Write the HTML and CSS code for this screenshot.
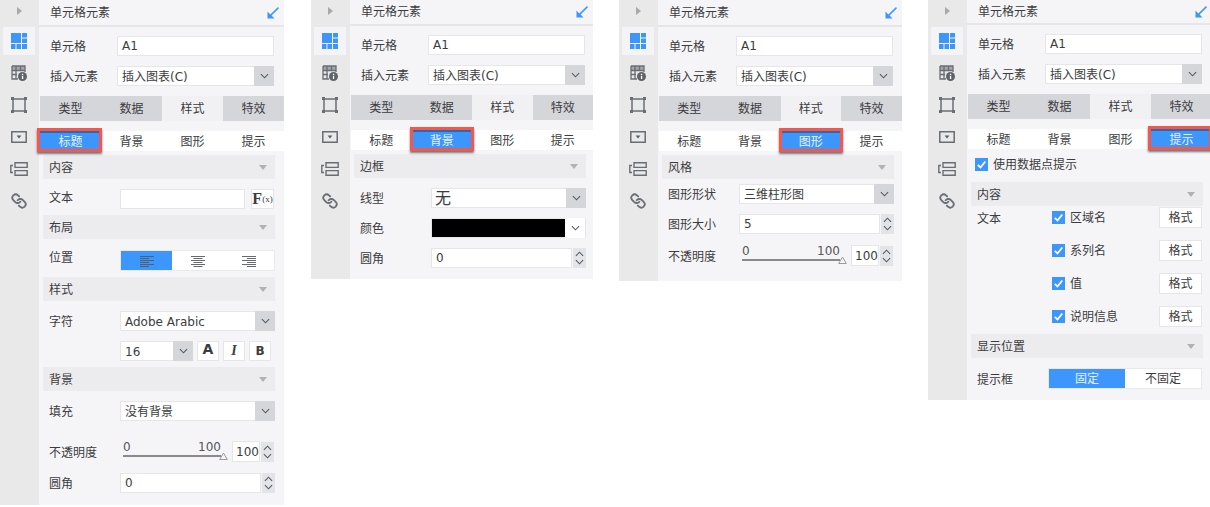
FILE: index.html
```html
<!DOCTYPE html>
<html lang="zh">
<head>
<meta charset="utf-8">
<title>单元格元素</title>
<link rel="stylesheet" href="styles.css">
</head>
<body>
<svg class="defs" xmlns="http://www.w3.org/2000/svg">
  <symbol id="i-grid" viewBox="0 0 16 16"><path fill="#3d96fb" d="M0 0h10v10H0zM11 0h5v4.500h-5zM11 5.500h5V10h-5zM0 11h4.500v5H0zM5.500 11H10v5H5.500zM11 11h5v5h-5z"/></symbol>
  <symbol id="i-info" viewBox="0 0 16 16"><path fill="none" stroke="#6a6d73" stroke-width="1.3" d="M1 1h13v6M1 1v13h6M1 5.500h13M1 9.500h5M5 1v13M9.500 1v5"/><path fill="#6a6d73" d="M1 1h13v4H1z" opacity=".55"/><circle cx="11.500" cy="11.500" r="4.500" fill="#5f6268"/><path fill="#fff" d="M10.900 8.800h1.300V10h-1.300zM10.900 10.800h1.300V14h-1.300z"/></symbol>
  <symbol id="i-frame" viewBox="0 0 16 16"><path fill="none" stroke="#6a6d73" stroke-width="1.5" d="M2 2h12v12H2z"/><path fill="#6a6d73" d="M0 0h3v3H0zM13 0h3v3h-3zM0 13h3v3H0zM13 13h3v3h-3z"/></symbol>
  <symbol id="i-drop" viewBox="0 0 16 12"><path fill="none" stroke="#6a6d73" stroke-width="1.5" d="M.8.800h14.400v10.400H.8z"/><path fill="#5a5d63" d="M5.600 4.500h4.800L8 7.500z"/></symbol>
  <symbol id="i-stack" viewBox="0 0 18 14"><path fill="none" stroke="#6a6d73" stroke-width="1.4" d="M5 .8h12.200v4.600H5zM5 8.600h12.200v4.600H5zM3 3.500H.8v7H3"/></symbol>
  <symbol id="i-link" viewBox="0 0 24 24"><g transform="translate(24 0) scale(-1 1)" fill="none" stroke="#6a6d73" stroke-width="2.700" stroke-linecap="round"><path d="M10 13a5 5 0 0 0 7.540.54l3-3a5 5 0 0 0-7.070-7.070l-1.720 1.710"/><path d="M14 11a5 5 0 0 0-7.540-.54l-3 3a5 5 0 0 0 7.070 7.070l1.710-1.710"/></g></symbol>
  <symbol id="i-arrow" viewBox="0 0 12 12"><path fill="#3d96fb" d="M11 0l1 1.200L4.600 8.600 7.500 11.500H.5V4.500l2.800 2.900z"/></symbol>
  <symbol id="i-down" viewBox="0 0 10 6"><path fill="none" stroke="#55585e" stroke-width="1.200" d="M1 1l4 4 4-4"/></symbol>
  <symbol id="i-up" viewBox="0 0 10 6"><path fill="none" stroke="#55585e" stroke-width="1.200" d="M1 5l4-4 4 4"/></symbol>
  <symbol id="i-left" viewBox="0 0 14 11"><path stroke="#55585e" stroke-width=".9" d="M0 .5h14M0 2.500h9M0 4.500h14M0 6.500h9M0 8.500h14M0 10.500h9"/></symbol>
  <symbol id="i-center" viewBox="0 0 14 11"><path stroke="#55585e" stroke-width=".9" d="M0 .5h14M2.500 2.500h9M0 4.500h14M2.500 6.500h9M0 8.500h14M2.500 10.500h9"/></symbol>
  <symbol id="i-right" viewBox="0 0 14 11"><path stroke="#55585e" stroke-width=".9" d="M0 .5h14M5 2.500h9M0 4.500h14M5 6.500h9M0 8.500h14M5 10.500h9"/></symbol>
  <symbol id="i-check" viewBox="0 0 13 13"><path fill="none" stroke="#fff" stroke-width="1.800" d="M2.800 6.800l2.700 2.700 4.800-6"/></symbol>
  <symbol id="i-thumb" viewBox="0 0 9 8"><path fill="#f5f5f7" stroke="#9a9a9e" d="M4.500 1 8.300 7.500H.7z"/></symbol>
</svg>

<main class="desk">

<section class="panel panel-a">
  <nav class="rail">
    <span class="rail-toggle"></span>
    <span class="rail-tile"><svg class="ic16"><use href="#i-grid"/></svg></span>
    <span class="rail-item"><svg class="ic16"><use href="#i-info"/></svg></span>
    <span class="rail-item"><svg class="ic16"><use href="#i-frame"/></svg></span>
    <span class="rail-item"><svg class="ic16 ic-drop"><use href="#i-drop"/></svg></span>
    <span class="rail-item"><svg class="ic16 ic-stack"><use href="#i-stack"/></svg></span>
    <span class="rail-item"><svg class="ic16"><use href="#i-link"/></svg></span>
  </nav>
  <div class="main">
    <header class="head"><span>单元格元素</span><svg class="head-ic"><use href="#i-arrow"/></svg></header>
    <div class="row top"><span class="lbl">单元格</span><div class="field grow">A1</div></div>
    <div class="row top"><span class="lbl">插入元素</span><div class="select grow"><span class="val">插入图表(C)</span><span class="caret"><svg class="chev"><use href="#i-down"/></svg></span></div></div>
    <div class="tabs"><span class="tab">类型</span><span class="tab">数据</span><span class="tab on">样式</span><span class="tab">特效</span></div>
    <div class="subtabs"><span class="sub active">标题</span><span class="sub">背景</span><span class="sub">图形</span><span class="sub">提示</span></div>
    <div class="sec first"><span>内容</span><i class="tri"></i></div>
    <div class="row"><span class="lbl lbl-up1">文本</span><div class="field w125"></div><div class="fx"><b>F</b><small>(x)</small></div></div>
    <div class="sec"><span>布局</span><i class="tri"></i></div>
    <div class="row tall"><span class="lbl lbl-up3">位置</span>
      <div class="seg grow">
        <span class="seg-b blue"><svg class="ic-al"><use href="#i-left"/></svg></span>
        <span class="seg-b"><svg class="ic-al"><use href="#i-center"/></svg></span>
        <span class="seg-b"><svg class="ic-al"><use href="#i-right"/></svg></span>
      </div>
    </div>
    <div class="sec"><span>样式</span><i class="tri"></i></div>
    <div class="row"><span class="lbl">字符</span><div class="select grow"><span class="val">Adobe Arabic</span><span class="caret"><svg class="chev"><use href="#i-down"/></svg></span></div></div>
    <div class="row">
      <span class="lbl"></span>
      <div class="select w73"><span class="val">16</span><span class="caret"><svg class="chev"><use href="#i-down"/></svg></span></div>
      <span class="fmt fmt-a">A</span><span class="fmt fmt-i">I</span><span class="fmt fmt-b">B</span>
    </div>
    <div class="sec"><span>背景</span><i class="tri"></i></div>
    <div class="row"><span class="lbl">填充</span><div class="select grow"><span class="val">没有背景</span><span class="caret"><svg class="chev"><use href="#i-down"/></svg></span></div></div>
    <div class="row slider-row gap-19"><span class="lbl">不透明度</span>
      <div class="slider"><div class="slider-nums"><span>0</span><span>100</span></div><div class="slider-line"></div><svg class="slider-thumb"><use href="#i-thumb"/></svg></div>
      <div class="field w28">100</div><div class="spin"><svg class="chev"><use href="#i-up"/></svg><svg class="chev"><use href="#i-down"/></svg></div>
    </div>
    <div class="row"><span class="lbl">圆角</span><div class="field w141">0</div><div class="spin"><svg class="chev"><use href="#i-up"/></svg><svg class="chev"><use href="#i-down"/></svg></div></div>
  </div>
</section>

<section class="panel panel-b">
  <nav class="rail">
    <span class="rail-toggle"></span>
    <span class="rail-tile"><svg class="ic16"><use href="#i-grid"/></svg></span>
    <span class="rail-item"><svg class="ic16"><use href="#i-info"/></svg></span>
    <span class="rail-item"><svg class="ic16"><use href="#i-frame"/></svg></span>
    <span class="rail-item"><svg class="ic16 ic-drop"><use href="#i-drop"/></svg></span>
    <span class="rail-item"><svg class="ic16 ic-stack"><use href="#i-stack"/></svg></span>
    <span class="rail-item"><svg class="ic16"><use href="#i-link"/></svg></span>
  </nav>
  <div class="main">
    <header class="head"><span>单元格元素</span><svg class="head-ic"><use href="#i-arrow"/></svg></header>
    <div class="row top"><span class="lbl">单元格</span><div class="field grow">A1</div></div>
    <div class="row top"><span class="lbl">插入元素</span><div class="select grow"><span class="val">插入图表(C)</span><span class="caret"><svg class="chev"><use href="#i-down"/></svg></span></div></div>
    <div class="tabs"><span class="tab">类型</span><span class="tab">数据</span><span class="tab on">样式</span><span class="tab">特效</span></div>
    <div class="subtabs"><span class="sub">标题</span><span class="sub active">背景</span><span class="sub">图形</span><span class="sub">提示</span></div>
    <div class="sec first"><span>边框</span><i class="tri"></i></div>
    <div class="row"><span class="lbl">线型</span><div class="select grow"><span class="val big">无</span><span class="caret"><svg class="chev"><use href="#i-down"/></svg></span></div></div>
    <div class="row"><span class="lbl">颜色</span><div class="color grow"><span class="swatch"></span><span class="caret white"><svg class="chev"><use href="#i-down"/></svg></span></div></div>
    <div class="row"><span class="lbl">圆角</span><div class="field w141">0</div><div class="spin"><svg class="chev"><use href="#i-up"/></svg><svg class="chev"><use href="#i-down"/></svg></div></div>
  </div>
</section>

<section class="panel panel-c">
  <nav class="rail">
    <span class="rail-toggle"></span>
    <span class="rail-tile"><svg class="ic16"><use href="#i-grid"/></svg></span>
    <span class="rail-item"><svg class="ic16"><use href="#i-info"/></svg></span>
    <span class="rail-item"><svg class="ic16"><use href="#i-frame"/></svg></span>
    <span class="rail-item"><svg class="ic16 ic-drop"><use href="#i-drop"/></svg></span>
    <span class="rail-item"><svg class="ic16 ic-stack"><use href="#i-stack"/></svg></span>
    <span class="rail-item"><svg class="ic16"><use href="#i-link"/></svg></span>
  </nav>
  <div class="main">
    <header class="head"><span>单元格元素</span><svg class="head-ic"><use href="#i-arrow"/></svg></header>
    <div class="row top"><span class="lbl">单元格</span><div class="field grow">A1</div></div>
    <div class="row top"><span class="lbl">插入元素</span><div class="select grow"><span class="val">插入图表(C)</span><span class="caret"><svg class="chev"><use href="#i-down"/></svg></span></div></div>
    <div class="tabs"><span class="tab">类型</span><span class="tab">数据</span><span class="tab on">样式</span><span class="tab">特效</span></div>
    <div class="subtabs"><span class="sub">标题</span><span class="sub">背景</span><span class="sub active">图形</span><span class="sub">提示</span></div>
    <div class="sec first"><span>风格</span><i class="tri"></i></div>
    <div class="row gap-5"><span class="lbl">图形形状</span><div class="select grow"><span class="val">三维柱形图</span><span class="caret"><svg class="chev"><use href="#i-down"/></svg></span></div></div>
    <div class="row"><span class="lbl">图形大小</span><div class="field w141">5</div><div class="spin"><svg class="chev"><use href="#i-up"/></svg><svg class="chev"><use href="#i-down"/></svg></div></div>
    <div class="row slider-row"><span class="lbl">不透明度</span>
      <div class="slider"><div class="slider-nums"><span>0</span><span>100</span></div><div class="slider-line"></div><svg class="slider-thumb"><use href="#i-thumb"/></svg></div>
      <div class="field w28">100</div><div class="spin"><svg class="chev"><use href="#i-up"/></svg><svg class="chev"><use href="#i-down"/></svg></div>
    </div>
  </div>
</section>

<section class="panel panel-d">
  <nav class="rail">
    <span class="rail-toggle"></span>
    <span class="rail-tile"><svg class="ic16"><use href="#i-grid"/></svg></span>
    <span class="rail-item"><svg class="ic16"><use href="#i-info"/></svg></span>
    <span class="rail-item"><svg class="ic16"><use href="#i-frame"/></svg></span>
    <span class="rail-item"><svg class="ic16 ic-drop"><use href="#i-drop"/></svg></span>
    <span class="rail-item"><svg class="ic16 ic-stack"><use href="#i-stack"/></svg></span>
    <span class="rail-item"><svg class="ic16"><use href="#i-link"/></svg></span>
  </nav>
  <div class="main">
    <header class="head"><span>单元格元素</span><svg class="head-ic"><use href="#i-arrow"/></svg></header>
    <div class="row top"><span class="lbl">单元格</span><div class="field grow">A1</div></div>
    <div class="row top"><span class="lbl">插入元素</span><div class="select grow"><span class="val">插入图表(C)</span><span class="caret"><svg class="chev"><use href="#i-down"/></svg></span></div></div>
    <div class="tabs"><span class="tab">类型</span><span class="tab">数据</span><span class="tab on">样式</span><span class="tab">特效</span></div>
    <div class="subtabs"><span class="sub">标题</span><span class="sub">背景</span><span class="sub">图形</span><span class="sub active">提示</span></div>
    <label class="use-tip"><span class="check"><svg class="check-ic"><use href="#i-check"/></svg></span>使用数据点提示</label>
    <div class="sec sec-tip"><span>内容</span><i class="tri"></i></div>
    <div class="tip-row first"><span class="lbl">文本</span><span class="check"><svg class="check-ic"><use href="#i-check"/></svg></span><span class="tip-name">区域名</span><span class="btn">格式</span></div>
    <div class="tip-row"><span class="lbl"></span><span class="check"><svg class="check-ic"><use href="#i-check"/></svg></span><span class="tip-name">系列名</span><span class="btn">格式</span></div>
    <div class="tip-row"><span class="lbl"></span><span class="check"><svg class="check-ic"><use href="#i-check"/></svg></span><span class="tip-name">值</span><span class="btn">格式</span></div>
    <div class="tip-row"><span class="lbl"></span><span class="check"><svg class="check-ic"><use href="#i-check"/></svg></span><span class="tip-name">说明信息</span><span class="btn">格式</span></div>
    <div class="sec sec-pos"><span>显示位置</span><i class="tri"></i></div>
    <div class="row tall pos-row"><span class="lbl">提示框</span><div class="seg seg-two grow"><span class="seg-b blue w76">固定</span><span class="seg-b">不固定</span></div></div>
  </div>
</section>

</main>
</body>
</html>
```
FILE: styles.css
```css
* { box-sizing: border-box; }
html, body { margin: 0; height: 100%; overflow: hidden; background: #fff; }
body { font: 12px/1 "DejaVu Sans", "Noto Sans CJK SC", sans-serif; color: #3c3c40; }
.defs { display: none; }

.desk { display: flex; align-items: flex-start; height: 507px; width: 1210px; }

.panel { display: flex; flex: none; }
.panel-a { width: 284px; height: 505px; }
.panel-b { width: 282px; height: 279px; margin-left: 27px; }
.panel-c { width: 283px; height: 281px; margin-left: 26px; }
.panel-d { width: 284px; height: 400px; margin-left: 26px; }

/* Left icon rail */
.rail { width: 39px; flex: none; background: #e9e9ea; display: flex; flex-direction: column; align-items: center; }
.rail-toggle { width: 0; height: 0; margin-top: 7px; margin-left: -1px; border-style: solid; border-width: 4.5px 0 4.5px 5px; border-color: transparent transparent transparent #a9a9ad; }
.rail-tile { width: 32px; height: 28px; margin-top: 12px; margin-left: -1px; background: #f4f4f6; display: flex; align-items: center; justify-content: center; }
.rail-item { height: 32px; display: flex; align-items: center; justify-content: center; margin-left: -1px; }
.rail-tile + .rail-item { margin-top: 2px; }
.ic16 { width: 16px; height: 16px; display: block; }
.ic-drop { height: 12px; }
.ic-stack { width: 18px; height: 14px; }

/* Panel body */
.main { flex: 1; background: #f5f5f7; min-width: 0; position: relative; }
.head { height: 27px; padding: 0 5px 0 11px; display: flex; align-items: center; justify-content: space-between; border-bottom: 2px solid #e6e6e8; }
.panel-b .head { height: 26px; }
.panel-d .head { height: 25px; }
.head-ic { width: 12px; height: 12px; }

.row { display: flex; align-items: center; height: 20px; margin-top: 10px; padding-left: 10px; }
.row.top { padding-left: 11px; }
.row.top .lbl { width: 67px; }
.head + .row { margin-top: 9px; }
.row.tall { height: 21px; margin-top: 11px; }
.lbl { width: 71px; flex: none; white-space: nowrap; padding-top: 2px; }
.lbl-up1 { padding-top: 0; margin-top: -2px; }
.lbl-up3 { padding-top: 0; margin-top: -6px; }
.grow { width: 155px; flex: none; }
.row.top .grow { width: 157px; }

.field { height: 20px; background: #fff; border: 1px solid #e6e6e8; padding-left: 4px; display: flex; align-items: center; flex: none; }
.w125 { width: 125px; }
.w28 { width: 28px; height: 21px; margin-left: 4px; padding-left: 3px; }
.w141 { width: 141px; }

.select { height: 20px; display: flex; background: #fff; border: 1px solid #e6e6e8; border-right: 0; align-items: center; flex: none; }
.val { flex: 1; padding: 2px 0 0 4px; white-space: nowrap; }
.val.big { font-size: 16px; padding-left: 3px; }
.caret { width: 20px; height: 20px; margin-top: -1px; margin-bottom: -1px; background: #d5d6da; display: flex; align-items: center; justify-content: center; flex: none; }
.caret.white { background: #fff; }
.chev { width: 9px; height: 6px; display: block; }
.w73 { width: 73px; }

.color { height: 20px; display: flex; background: #fff; border: 1px solid #e6e6e8; }
.swatch { width: 134px; background: #000; margin-right: 1px; }
.color .caret { margin: -1px 0; height: 20px; width: 19px; }

.spin { width: 13px; height: 20px; margin-left: 1px; background: #e3e4e7; display: flex; flex-direction: column; justify-content: space-between; align-items: center; padding: 3px 0; flex: none; }

.fx { width: 23px; height: 20px; margin-left: 6px; background: #fff; border: 1px solid #e6e6e8; display: flex; align-items: center; justify-content: center; font-family: "Liberation Serif", serif; }
.fx b { font-size: 16px; }
.fx small { font-size: 9px; }

.fmt { width: 22px; height: 20px; margin-left: 4px; background: #fff; border: 1px solid #e6e6e8; display: flex; align-items: center; justify-content: center; font-weight: 700; flex: none; }
.fmt-a { font-size: 14px; padding-bottom: 4px; }
.fmt-i { font-family: "Liberation Serif", serif; font-style: italic; font-size: 14px; }
.fmt-b { font-size: 12px; }

/* Tabs */
.tabs { display: flex; height: 25px; margin: 10px 0 0 1px; }
.tab { flex: 1; background: #d5d6da; display: flex; align-items: center; justify-content: center; padding-top: 1px; }
.tab.on { background: #f1f1f3; }
.subtabs { display: flex; height: 20px; margin: 10px 0 0 1px; background: #fff; }
.sub { flex: 1; display: flex; align-items: center; justify-content: center; position: relative; padding-top: 1px; }
.sub.active { background: #3d96fb; color: #e8f2ff; box-shadow: inset 0 2px 0 #2f6aa8; }
.sub.active::after { content: ""; position: absolute; top: -3px; bottom: -1px; left: -2px; right: -2px; border: 3px solid #f5574a; box-shadow: 0 2px 2px rgba(40, 50, 60, .65); }
.sub.active:first-child::after { left: -3px; right: -1px; }
.panel-d .sub.active::after { left: -3px; right: 0; }

/* Sections */
.sec { width: 232px; height: 24px; margin: 6px 0 0 4px; padding: 0 6px; background: #ececee; display: flex; align-items: center; justify-content: space-between; }
.sec > span { padding-top: 2px; }
.sec.first { margin-top: 4px; }
.tri { width: 0; height: 0; border-style: solid; border-width: 5px 4px 0; border-color: #b2b2b6 transparent transparent; margin-right: 2px; }

/* Segmented control */
.seg { display: flex; height: 21px; background: #fff; border: 1px solid #e9e9eb; flex: none; }
.seg-b { flex: 1; display: flex; align-items: center; justify-content: center; padding-top: 1px; }
.seg-b.blue { background: #3d96fb; color: #e8f2ff; }
.w76 { flex: none; width: 76px; }
.ic-al { width: 14px; height: 11px; }

/* Slider */
.slider-row { height: 23px; }
.gap-19 { margin-top: 19px; }
.gap-5 { margin-top: 5px; }
.slider { width: 108px; height: 23px; padding: 1px 7px 0 3px; position: relative; flex: none; }
.slider-nums { display: flex; justify-content: space-between; color: #55555a; }
.slider-line { height: 2px; margin-top: 2px; background: #8a8a8e; }
.slider-thumb { position: absolute; right: 0; top: 12px; width: 9px; height: 8px; }

/* Tooltip panel */
.use-tip { display: flex; align-items: center; height: 13px; margin: 9px 0 0 8px; gap: 5px; }
.check { width: 13px; height: 13px; background: #3d96fb; display: block; flex: none; }
.check-ic { width: 13px; height: 13px; display: block; }
.sec-tip { margin-top: 11px; }
.tip-row { display: flex; align-items: center; height: 21px; margin-top: 12px; padding-left: 10px; }
.tip-row.first { margin-top: 1px; }
.tip-row .lbl { width: 75px; }
.tip-name { width: 94px; padding: 1px 0 0 5px; flex: none; white-space: nowrap; }
.btn { width: 43px; height: 21px; background: #fff; border: 1px solid #e6e6e8; display: flex; align-items: center; justify-content: center; flex: none; }
.sec-pos { margin-top: 7px; }
.row.pos-row { margin-top: 10px; }
.seg-two { width: 154px; }
```
